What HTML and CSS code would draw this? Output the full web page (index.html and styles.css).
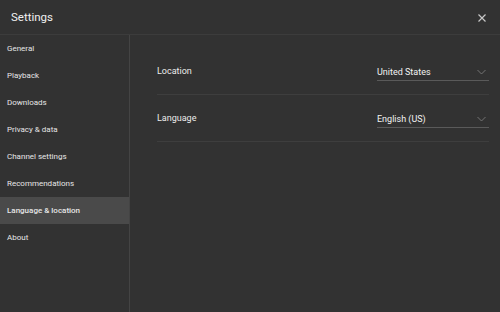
FILE: index.html
```html
<!DOCTYPE html>
<html>
<head>
<meta charset="utf-8">
<link rel="stylesheet" href="styles.css">
</head>
<body>
<div class="dialog">
  <header class="header">
    <h1 class="title">Settings</h1>
    <button class="close" aria-label="Close">
      <svg width="10" height="10" viewBox="0 0 10 10"><path d="M1.5 1.5L8.5 8.5M8.5 1.5L1.5 8.5" stroke="#c8c8c8" stroke-width="1.2" fill="none"/></svg>
    </button>
  </header>
  <div class="body">
    <nav class="sidebar">
      <div class="nav-item">General</div>
      <div class="nav-item">Playback</div>
      <div class="nav-item">Downloads</div>
      <div class="nav-item">Privacy &amp; data</div>
      <div class="nav-item">Channel settings</div>
      <div class="nav-item">Recommendations</div>
      <div class="nav-item active">Language &amp; location</div>
      <div class="nav-item">About</div>
    </nav>
    <main class="content">
      <div class="row">
        <span class="label">Location</span>
        <div class="select">
          <span>United States</span>
          <svg class="chev" width="9" height="6" viewBox="0 0 9 6"><path d="M0.5 1L4.5 5L8.5 1" stroke="#7a7a7a" stroke-width="0.9" fill="none"/></svg>
        </div>
      </div>
      <div class="row">
        <span class="label">Language</span>
        <div class="select">
          <span>English (US)</span>
          <svg class="chev" width="9" height="6" viewBox="0 0 9 6"><path d="M0.5 1L4.5 5L8.5 1" stroke="#7a7a7a" stroke-width="0.9" fill="none"/></svg>
        </div>
      </div>
    </main>
  </div>
</div>
</body>
</html>
```
FILE: styles.css
```css
* { box-sizing: border-box; }
html, body {
  margin: 0;
  padding: 0;
  width: 500px;
  height: 312px;
  overflow: hidden;
  background: #323232;
  font-family: Roboto, "Liberation Sans", sans-serif;
  color: #ececec;
}
.dialog {
  display: flex;
  flex-direction: column;
  height: 312px;
}
.header {
  height: 35px;
  display: flex;
  align-items: center;
  justify-content: space-between;
  padding: 0 13px 0 11px;
  border-bottom: 1px solid #3c3c3c;
}
.title {
  margin: 0;
  font-size: 11.5px;
  font-weight: 400;
  color: #f0f0f0;
}
.close {
  background: none;
  border: 0;
  padding: 0;
  width: 10px;
  height: 10px;
  display: flex;
  align-items: center;
  justify-content: center;
  margin-top: 1px;
}
.body {
  flex: 1;
  display: flex;
}
.sidebar {
  width: 130px;
  border-right: 1px solid #444444;
  display: flex;
  flex-direction: column;
}
.nav-item {
  height: 27px;
  display: flex;
  align-items: center;
  padding-left: 7px;
  font-size: 8px;
  font-weight: 400;
  color: #e6e6e6;
}
.nav-item.active {
  background: #4a4a4a;
  font-weight: 500;
}
.content {
  flex: 1;
  padding: 13px 11px 0 27px;
}
.row {
  height: 47px;
  display: flex;
  align-items: center;
  justify-content: space-between;
  border-bottom: 1px solid #3e3e3e;
  padding-bottom: 1px;
}
.label {
  font-size: 9px;
  font-weight: 400;
  color: #ececec;
}
.select {
  width: 112px;
  height: 15px;
  display: flex;
  align-items: center;
  justify-content: space-between;
  border-bottom: 1px solid #5a5a5a;
  font-size: 9px;
  font-weight: 400;
  color: #f2f2f2;
  padding-right: 3px;
  margin-top: 6px;
  padding-bottom: 2px;
}
.chev { display: block; }
```
